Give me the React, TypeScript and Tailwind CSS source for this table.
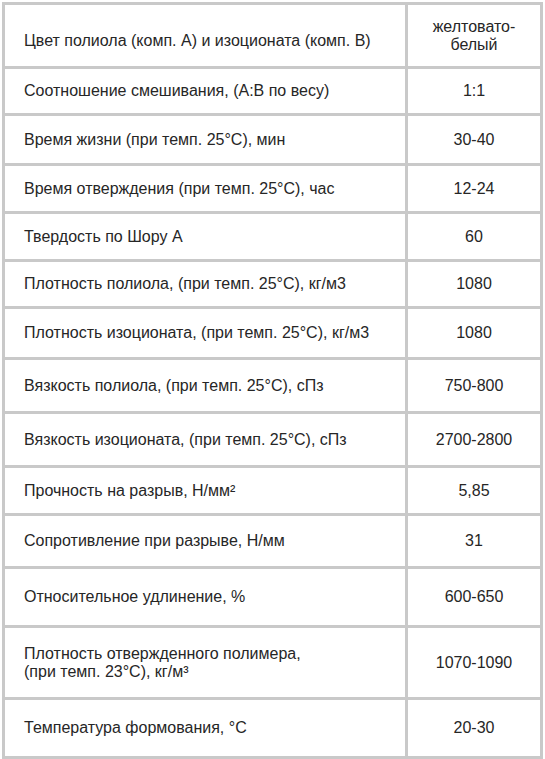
const ROWS: { label: React.ReactNode; value: React.ReactNode; h: string; pt?: string }[] = [
  {
    label: "Цвет полиола (комп. А) и изоционата (комп. В)",
    value: (
      <>
        желтовато-
        <br />
        белый
      </>
    ),
    h: "h-[64px]",
    pt: "pt-[10px]",
  },
  { label: "Соотношение смешивания, (А:В по весу)", value: "1:1", h: "h-[47px]" },
  { label: "Время жизни (при темп. 25°С), мин", value: "30-40", h: "h-[50px]" },
  { label: "Время отверждения (при темп. 25°С), час", value: "12-24", h: "h-[48px]" },
  { label: "Твердость по Шору А", value: "60", h: "h-[48px]" },
  { label: "Плотность полиола, (при темп. 25°С), кг/м3", value: "1080", h: "h-[47px]" },
  { label: "Плотность изоционата, (при темп. 25°С), кг/м3", value: "1080", h: "h-[51px]" },
  { label: "Вязкость полиола, (при темп. 25°С), сПз", value: "750-800", h: "h-[54px]" },
  { label: "Вязкость изоционата, (при темп. 25°С), сПз", value: "2700-2800", h: "h-[54px]" },
  { label: "Прочность на разрыв, Н/мм²", value: "5,85", h: "h-[48px]" },
  { label: "Сопротивление при разрыве, Н/мм", value: "31", h: "h-[53px]" },
  { label: "Относительное удлинение, %", value: "600-650", h: "h-[59px]" },
  {
    label: (
      <>
        Плотность отвержденного полимера,
        <br />
        (при темп. 23°С), кг/м³
      </>
    ),
    value: "1070-1090",
    h: "h-[72px]",
  },
  { label: "Температура формования, °С", value: "20-30", h: "h-[56px]" },
];

export default function App() {
  return (
    <div className="min-h-screen bg-white pt-[2px] pl-[2px] font-['Liberation_Sans',Arial,sans-serif] text-[16px] text-[#262626]">
      <div className="w-[541px] border-[3px] border-[#c9c9c9]">
        {ROWS.map((r, i) => (
          <div
            key={i}
            className={`flex ${r.h} ${i < ROWS.length - 1 ? "border-b-[3px] border-[#c9c9c9]" : ""}`}
          >
            <div
              className={`flex w-[403px] items-center border-r-[3px] border-[#c9c9c9] pl-[19px] leading-[18px] ${r.pt ?? ""}`}
            >
              <span>{r.label}</span>
            </div>
            <div className="flex flex-1 items-center justify-center text-center leading-[18px]">
              <span>{r.value}</span>
            </div>
          </div>
        ))}
      </div>
    </div>
  );
}
